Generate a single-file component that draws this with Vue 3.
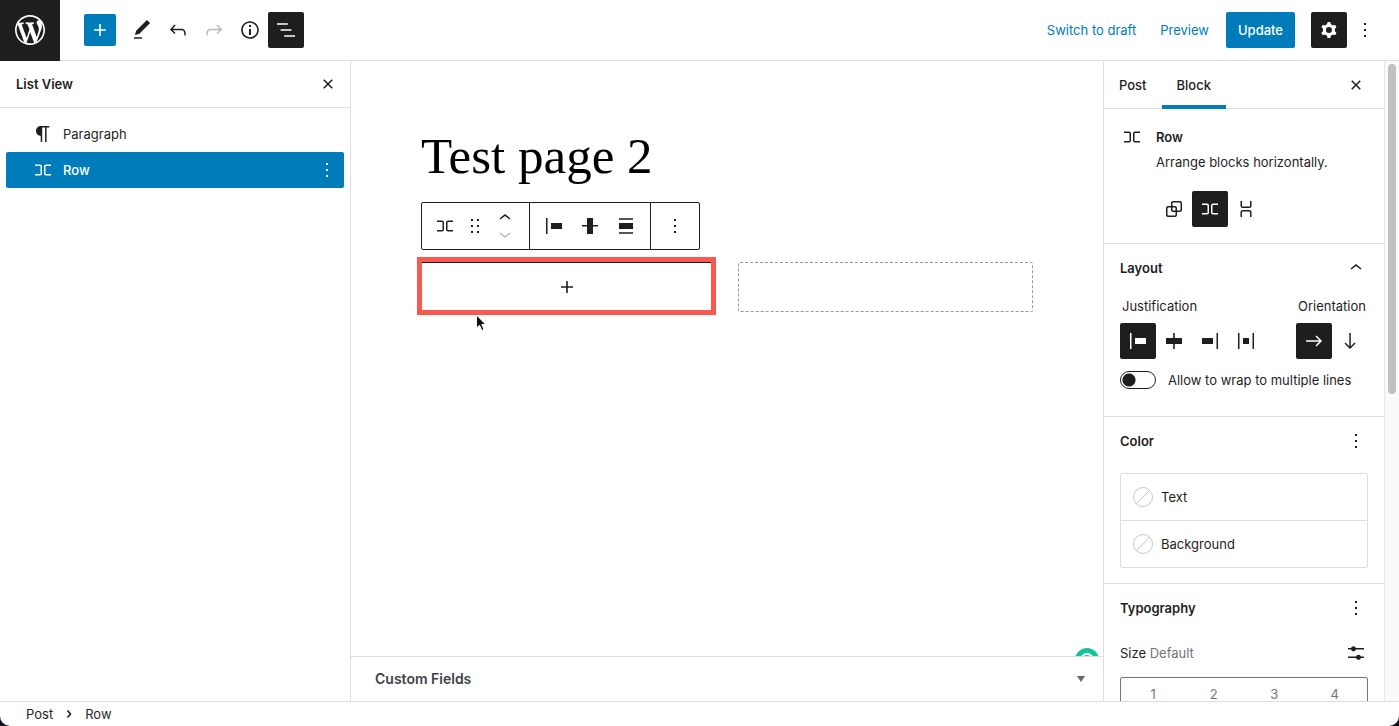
<script setup>
import { ref, h } from 'vue'

const paths = {
  plus: 'M18 11.2h-5.2V6h-1.6v5.2H6v1.6h5.2V18h1.6v-5.2H18z',
  edit: 'M20.1 5.1L16.9 2 6.2 12.7l-1.3 4.4 4.5-1.3L20.1 5.1zM4 20.8h8v-1.5H4v1.5z',
  undo: 'M18.3 11.7c-.6-.6-1.4-.9-2.3-.9H6.7l2.9-3.3-1.1-1-4.5 5L8.5 16l1-1-2.7-2.7H16c.5 0 .9.2 1.3.5 1 1 1 3.4 1 4.5v.3h1.5v-.2c0-1.5 0-4.3-1.5-5.7z',
  redo: 'M15.6 6.5l-1.1 1 2.9 3.3H8c-.9 0-1.7.3-2.3.9-1.4 1.5-1.4 4.2-1.4 5.6v.2h1.5v-.3c0-1.1 0-3.5 1-4.5.3-.3.7-.5 1.3-.5h9.2L14.5 15l1.1 1.1 4.6-4.6-4.6-5z',
  info: 'M12 3.2c-4.8 0-8.8 3.9-8.8 8.8 0 4.8 3.9 8.8 8.8 8.8 4.8 0 8.8-3.9 8.8-8.8 0-4.8-4-8.8-8.8-8.8zm0 16c-4 0-7.2-3.3-7.2-7.2C4.8 8 8 4.8 12 4.8s7.2 3.3 7.2 7.2c0 4-3.2 7.2-7.2 7.2zM11 17h2v-6h-2v6zm0-8h2V7h-2v2z',
  list: 'M13.8 5.2H3v1.5h10.8V5.2zm-3.6 12v1.5H21v-1.5H10.2zm7.2-6H6.6v1.5h10.8v-1.5z',
  close: 'M12 13.06l3.712 3.713 1.061-1.06L13.061 12l3.712-3.712-1.06-1.06L12 10.938 8.288 7.227l-1.061 1.06L10.939 12l-3.712 3.712 1.06 1.061L12 13.061z',
  more: 'M13 19h-2v-2h2v2zm0-6h-2v-2h2v2zm0-6h-2V5h2v2z',
  row: 'M4 6.5h5a2 2 0 0 1 2 2v7a2 2 0 0 1-2 2H4V16h5a.5.5 0 0 0 .5-.5v-7A.5.5 0 0 0 9 8H4V6.5Zm16 0h-5a2 2 0 0 0-2 2v7a2 2 0 0 0 2 2h5V16h-5a.5.5 0 0 1-.5-.5v-7A.5.5 0 0 1 15 8h5V6.5Z',
  stack: 'M17.5 4v5a2 2 0 0 1-2 2h-7a2 2 0 0 1-2-2V4H8v5a.5.5 0 0 0 .5.5h7A.5.5 0 0 0 16 9V4h1.5Zm0 16v-5a2 2 0 0 0-2-2h-7a2 2 0 0 0-2 2v5H8v-5a.5.5 0 0 1 .5-.5h7a.5.5 0 0 1 .5.5v5h1.5Z',
  group: 'M18 4h-7c-1.1 0-2 .9-2 2v3H6c-1.1 0-2 .9-2 2v7c0 1.1.9 2 2 2h7c1.1 0 2-.9 2-2v-3h3c1.1 0 2-.9 2-2V6c0-1.1-.9-2-2-2zm-4.5 14c0 .3-.2.5-.5.5H6c-.3 0-.5-.2-.5-.5v-7c0-.3.2-.5.5-.5h3V13c0 1.1.9 2 2 2h2.5v3zm0-4.5H11c-.3 0-.5-.2-.5-.5v-2.5H13c.3 0 .5.2.5.5v2.5zm5-.5c0 .3-.2.5-.5.5h-3V11c0-1.1-.9-2-2-2h-2.5V6c0-.3.2-.5.5-.5h7c.3 0 .5.2.5.5v7z',
  left: 'M9 9v6h11V9H9zM4 20h1.5V4H4v16z',
  center: 'M20 9h-7.2V4h-1.6v5H4v6h7.2v5h1.6v-5H20z',
  right: 'M4 15h11V9H4v6zM18.5 4v16H20V4h-1.5z',
  between: 'M9 15h6V9H9v6zm-5 5h1.5V4H4v16zM18.5 4v16H20V4h-1.5z',
  middle: 'M20 11h-5V4H9v7H4v1.5h5V20h6v-7.5h5z',
  none: 'M5 15h14V9H5v6zm0 4.8h14v-1.5H5v1.5zM5 4.2v1.5h14V4.2H5z',
  up: 'M6.5 12.4L12 8l5.5 4.4-.9 1.2L12 10l-4.5 3.6-1-1.2z',
  down: 'M17.5 11.6L12 16l-5.5-4.4.9-1.2L12 14l4.5-3.6 1 1.2z',
  drag: 'M8 7h2V5H8v2zm0 6h2v-2H8v2zm0 6h2v-2H8v2zm6-14v2h2V5h-2zm0 8h2v-2h-2v2zm0 6h2v-2h-2v2z',
  arrowRight: 'm14.5 6.5-1 1 3.7 3.7H4v1.6h13.2l-3.7 3.7 1 1 5.6-5.5z',
  arrowDown: 'm16.5 13.5-3.7 3.7V4h-1.5v13.2l-3.8-3.7-1 1 5.5 5.6 5.5-5.6z',
  cog: 'M10.289 4.836A1 1 0 0111.275 4h1.306a1 1 0 01.987.836l.244 1.466c.787.26 1.503.679 2.108 1.218l1.393-.522a1 1 0 011.216.437l.653 1.13a1 1 0 01-.23 1.273l-1.148.944a6.025 6.025 0 010 2.435l1.149.946a1 1 0 01.23 1.272l-.653 1.13a1 1 0 01-1.216.437l-1.394-.522c-.605.54-1.32.958-2.108 1.218l-.244 1.466a1 1 0 01-.987.836h-1.306a1 1 0 01-.986-.836l-.244-1.466a5.995 5.995 0 01-2.108-1.218l-1.394.522a1 1 0 01-1.217-.436l-.653-1.131a1 1 0 01.23-1.272l1.149-.946a6.026 6.026 0 010-2.435l-1.148-.944a1 1 0 01-.23-1.272l.653-1.131a1 1 0 011.217-.437l1.393.522a5.994 5.994 0 012.108-1.218l.244-1.466zM14.929 12a3 3 0 11-6 0 3 3 0 016 0z',
  paragraph: 'M18.3 4H9.9v-.1l-.9.2c-2.3.4-4 2.4-4 4.8s1.7 4.4 4 4.8l.7.1V20h1.5V5.5h2.9V20h1.5V5.5h2.7V4z',
  settings: 'M14.5 13.8c-1.1 0-2.1.7-2.4 1.8H4V17h8.1c.3 1 1.3 1.8 2.4 1.8s2.1-.7 2.4-1.8H20v-1.5h-3.1c-.3-1-1.3-1.7-2.4-1.7zM11.9 7c-.3-1-1.3-1.8-2.4-1.8S7.4 6 7.1 7H4v1.5h3.1c.3 1 1.3 1.8 2.4 1.8s2.1-.7 2.4-1.8H20V7h-8.1z',
}

const Icon = (props) =>
  h('svg', { width: 24, height: 24, viewBox: '0 0 24 24', fill: 'currentColor', 'aria-hidden': 'true' }, [
    h('path', { d: paths[props.name], 'fill-rule': 'evenodd' }),
  ])
Icon.props = ['name']

const variation = ref('row')
const justify = ref('left')
const orientation = ref('arrowRight')
const wrap = ref(false)
const variations = [['group', 'Group'], ['row', 'Row'], ['stack', 'Stack']]
const justifications = [
  ['left', 'Justify items left'],
  ['center', 'Justify items center'],
  ['right', 'Justify items right'],
  ['between', 'Space between items'],
]
const orientations = [['arrowRight', 'Horizontal'], ['arrowDown', 'Vertical']]
</script>

<template>
  <div class="editor">
    <header class="topbar">
      <a class="logo" href="#" aria-label="View posts">
        <svg width="30" height="30" viewBox="0 0 20 20" fill="currentColor" aria-hidden="true">
          <path d="M20 10c0-5.51-4.49-10-10-10C4.48 0 0 4.49 0 10c0 5.52 4.48 10 10 10 5.51 0 10-4.48 10-10zM7.78 15.37L4.37 6.22c.55-.02 1.17-.08 1.17-.08.5-.06.44-1.13-.06-1.11 0 0-1.45.11-2.37.11-.18 0-.37 0-.58-.01C4.12 2.69 6.87 1.11 10 1.11c2.33 0 4.45.87 6.05 2.34-.68-.11-1.65.39-1.65 1.58 0 .74.45 1.36.9 2.1.35.61.55 1.36.55 2.46 0 1.49-1.4 5-1.4 5l-3.03-8.37c.54-.02.82-.17.82-.17.5-.05.44-1.25-.06-1.22 0 0-1.44.12-2.38.12-.87 0-2.33-.12-2.33-.12-.5-.03-.56 1.2-.06 1.22l.92.08 1.26 3.41zM17.41 10c.24-.64.74-1.87.43-4.25.7 1.29 1.05 2.71 1.05 4.25 0 3.29-1.73 6.24-4.4 7.78.97-2.59 1.94-5.2 2.92-7.78zM6.1 18.09C3.12 16.65 1.11 13.53 1.11 10c0-1.3.23-2.48.72-3.59C3.25 10.3 4.67 14.2 6.1 18.09zm4.03-6.63l2.58 6.98c-.86.29-1.76.45-2.71.45-.79 0-1.57-.11-2.29-.33.81-2.38 1.62-4.74 2.42-7.1z" />
        </svg>
      </a>
      <div class="tools">
        <button class="inserter" aria-label="Toggle block inserter"><Icon name="plus" /></button>
        <button class="icon-btn" aria-label="Tools"><Icon name="edit" /></button>
        <button class="icon-btn" aria-label="Undo"><Icon name="undo" /></button>
        <button class="icon-btn faded" aria-label="Redo"><Icon name="redo" /></button>
        <button class="icon-btn" aria-label="Details"><Icon name="info" /></button>
        <button class="icon-btn active" aria-label="List View"><Icon name="list" /></button>
      </div>
      <div class="actions">
        <button class="link-btn">Switch to draft</button>
        <button class="link-btn">Preview</button>
        <button class="update">Update</button>
        <div class="action-icons">
          <button class="icon-btn active" aria-label="Settings"><Icon name="cog" /></button>
          <button class="icon-btn" aria-label="Options"><Icon name="more" /></button>
        </div>
      </div>
    </header>

    <div class="body">
      <aside class="list-view">
        <div class="list-head">
          <h2>List View</h2>
          <button class="icon-btn slim" aria-label="Close list view"><Icon name="close" /></button>
        </div>
        <ul class="tree">
          <li><a class="node" href="#"><Icon name="paragraph" /><span>Paragraph</span></a></li>
          <li class="selected">
            <a class="node" href="#"><Icon name="row" /><span>Row</span></a>
            <button class="icon-btn row-more" aria-label="Row options"><Icon name="more" /></button>
          </li>
        </ul>
      </aside>

      <main class="content">
        <div class="canvas">
          <article class="post">
            <h1>Test page 2</h1>
            <div class="toolbar" role="toolbar" aria-label="Block tools">
              <div class="seg seg-block">
                <button aria-label="Row"><Icon name="row" /></button>
                <button aria-label="Drag"><Icon name="drag" /></button>
                <div class="movers">
                  <button aria-label="Move up"><Icon name="up" /></button>
                  <button class="faded" aria-label="Move down"><Icon name="down" /></button>
                </div>
              </div>
              <div class="seg seg-align">
                <button class="wide" aria-label="Justify"><Icon name="left" /></button>
                <button class="wide" aria-label="Vertical alignment"><Icon name="middle" /></button>
                <button class="wide" aria-label="Align"><Icon name="none" /></button>
              </div>
              <div class="seg seg-more">
                <button aria-label="Options"><Icon name="more" /></button>
              </div>
            </div>
            <div class="columns">
              <div class="slot first">
                <button class="appender" aria-label="Add block"><Icon name="plus" /></button>
                <svg class="cursor" width="14" height="20" viewBox="0 0 14 20" aria-hidden="true">
                  <path d="M1.500 1v13l3-2.700 2.300 5.200 2.200-1-2.200-5h4z" fill="#111" stroke="#fff" stroke-width="1" />
                </svg>
              </div>
              <div class="slot dashed"></div>
            </div>
          </article>
          <svg class="badge" width="24" height="24" viewBox="0 0 24 24" aria-hidden="true">
            <circle cx="12" cy="12" r="12" fill="#15c39a" />
            <circle cx="12" cy="12" r="6" fill="none" stroke="#fff" stroke-width="2" />
          </svg>
        </div>
        <button class="custom-fields">
          <span>Custom Fields</span>
          <svg width="10" height="6" viewBox="0 0 10 6" aria-hidden="true"><path d="M1 0h8L5 6z" fill="#646970" /></svg>
        </button>
      </main>

      <aside class="sidebar">
        <div class="panel">
          <div class="tabs">
            <button class="tab">Post</button>
            <button class="tab current">Block</button>
            <button class="icon-btn slim tab-close" aria-label="Close settings"><Icon name="close" /></button>
          </div>

          <section class="card">
            <Icon name="row" />
            <div>
              <h2>Row</h2>
              <p>Arrange blocks horizontally.</p>
              <div class="switcher">
                <button v-for="[id, label] in variations" :key="id" class="icon-btn" :class="{ active: variation === id }" :aria-label="label" @click="variation = id"><Icon :name="id" /></button>
              </div>
            </div>
          </section>

          <section class="group layout">
            <div class="group-head">
              <h2>Layout</h2>
              <button class="icon-btn slim" aria-label="Collapse layout"><Icon name="up" /></button>
            </div>
            <div class="layout-row">
              <fieldset>
                <legend>Justification</legend>
                <div class="buttons">
                  <button v-for="[id, label] in justifications" :key="id" class="icon-btn" :class="{ active: justify === id }" :aria-label="label" @click="justify = id"><Icon :name="id" /></button>
                </div>
              </fieldset>
              <fieldset>
                <legend>Orientation</legend>
                <div class="buttons">
                  <button v-for="[id, label] in orientations" :key="id" class="icon-btn" :class="{ active: orientation === id }" :aria-label="label" @click="orientation = id"><Icon :name="id" /></button>
                </div>
              </fieldset>
            </div>
            <div class="wrap-row">
              <input id="wrap" v-model="wrap" class="toggle" type="checkbox" />
              <label for="wrap">Allow to wrap to multiple lines</label>
            </div>
          </section>

          <section class="group color">
            <div class="group-head">
              <h2>Color</h2>
              <button class="icon-btn slim" aria-label="Color options"><Icon name="more" /></button>
            </div>
            <div class="color-list">
              <button v-for="name in ['Text', 'Background']" :key="name">
                <svg width="20" height="20" viewBox="0 0 20 20" fill="none" stroke="#c8c8c8" aria-hidden="true">
                  <circle cx="10" cy="10" r="9.5" /><path d="M3.500 16.500l13-13" />
                </svg>
                <span>{{ name }}</span>
              </button>
            </div>
          </section>

          <section class="group typography">
            <div class="group-head">
              <h2>Typography</h2>
              <button class="icon-btn slim" aria-label="Typography options"><Icon name="more" /></button>
            </div>
            <div class="size-row">
              <span>Size <span class="muted">Default</span></span>
              <button class="icon-btn slim" aria-label="Set custom size"><Icon name="settings" /></button>
            </div>
            <div class="sizes">
              <button v-for="n in 4" :key="n">{{ n }}</button>
            </div>
          </section>
        </div>
        <div class="scrollbar"><div class="thumb"></div></div>
      </aside>
    </div>

    <footer class="crumbs">
      <a href="#">Post</a>
      <svg width="6" height="8" viewBox="0 0 6 8" fill="none" stroke="#1e1e1e" stroke-width="1.600" aria-hidden="true"><path d="M1.500 .5L4.500 4l-3 3.500" /></svg>
      <span>Row</span>
    </footer>
  </div>
</template>

<style>
body {
  background: #14141c;
}
</style>

<style scoped>
.editor {
  display: flex;
  flex-direction: column;
  height: 100vh;
  overflow: hidden;
  border-radius: 0 0 10px 10px;
  background: #fff;
  color: #1e1e1e;
  font: 400 13px/20px Inter, "Liberation Sans", sans-serif;
}
* {
  box-sizing: border-box;
}
button {
  display: flex;
  align-items: center;
  justify-content: center;
  padding: 0;
  border: 0;
  border-radius: 2px;
  background: none;
  color: inherit;
  font: inherit;
  cursor: pointer;
}
a {
  color: inherit;
  text-decoration: none;
}
svg {
  display: block;
  flex: none;
}
h1, h2, p, ul, fieldset {
  margin: 0;
  padding: 0;
  border: 0;
}
h2 {
  font-size: 13px;
  font-weight: 600;
}
.icon-btn {
  width: 36px;
  height: 36px;
}
.slim {
  width: 24px;
}
.active {
  background: #1e1e1e;
  color: #fff;
}
.faded {
  color: #b9b9b9;
}

.topbar {
  display: flex;
  flex: none;
  align-items: center;
  height: 61px;
  border-bottom: 1px solid #ddd;
}
.logo {
  display: flex;
  align-items: center;
  justify-content: center;
  align-self: flex-start;
  width: 60px;
  height: 61px;
  padding-bottom: 1px;
  background: #1e1e1e;
  color: #fff;
}
.tools {
  display: flex;
  align-items: center;
  padding-left: 24px;
}
.inserter {
  width: 32px;
  height: 32px;
  margin-right: 8px;
  background: #007cba;
  color: #fff;
}
.actions {
  display: flex;
  align-items: center;
  margin-left: auto;
  padding-right: 16px;
}
.link-btn {
  height: 36px;
  padding: 0 12px;
  color: #007cba;
}
.update {
  height: 36px;
  margin: 0 16px 0 5px;
  padding: 0 12px;
  background: #007cba;
  color: #fff;
  font-weight: 500;
}
.action-icons {
  display: flex;
}

.body {
  display: flex;
  flex: 1;
  min-height: 0;
}
.list-view {
  flex: none;
  width: 351px;
  border-right: 1px solid #ddd;
}
.list-head {
  display: flex;
  align-items: center;
  justify-content: space-between;
  height: 47px;
  padding: 0 10px 0 16px;
  border-bottom: 1px solid #ddd;
}
.tree {
  padding: 8px 6px;
  list-style: none;
}
.tree li {
  display: flex;
  align-items: center;
  height: 36px;
  border-radius: 2px;
}
.node {
  display: flex;
  flex: 1;
  align-items: center;
  gap: 8px;
  padding-left: 25px;
}
.row-more {
  width: 34px;
}
.selected {
  background: #007cba;
  color: #fff;
  font-weight: 500;
}

.content {
  display: flex;
  flex: 1;
  flex-direction: column;
  min-width: 0;
}
.canvas {
  position: relative;
  flex: 1;
  overflow: hidden;
  padding: 61px 24px 0;
}
.post {
  max-width: 612px;
  margin: 0 auto;
}
h1 {
  color: #000;
  font: 400 51px/68px "Liberation Serif", serif;
}
.toolbar {
  display: inline-flex;
  height: 48px;
  margin: 12px 0;
  border: 1px solid #1e1e1e;
  border-radius: 2px;
  vertical-align: top;
}
.seg {
  display: flex;
  align-items: center;
}
.seg + .seg {
  border-left: 1px solid #1e1e1e;
}
.seg-block {
  gap: 6px;
  padding: 0 12px 0 11px;
}
.seg-align {
  padding: 0 6px;
}
.wide {
  width: 36px;
}
.seg-more {
  padding: 0 12px;
}
.movers button {
  height: 16px;
}
.columns {
  display: grid;
  grid-template-columns: 1fr 1fr;
  gap: 22px;
}
.slot {
  position: relative;
  height: 50px;
}
.first {
  border: 1px solid #1e1e1e;
}
.first::after {
  position: absolute;
  inset: -6px -1px -4px -5px;
  border: 5px solid #f9594f;
  content: "";
  pointer-events: none;
}
.dashed {
  border: 1px dashed #999;
  border-radius: 2px;
}
.appender {
  width: 100%;
  height: 100%;
  padding-right: 3px;
}
.cursor {
  position: absolute;
  top: 51px;
  left: 53px;
}
.badge {
  position: absolute;
  right: 4px;
  bottom: -16px;
}
.custom-fields {
  flex: none;
  justify-content: space-between;
  height: 45px;
  padding: 0 17px 0 24px;
  border-top: 1px solid #ddd;
  border-radius: 0;
  color: #3c434a;
  font-size: 14px;
  font-weight: 600;
}

.sidebar {
  display: flex;
  flex: none;
  width: 296px;
  border-left: 1px solid #ddd;
}
.panel {
  flex: 1;
  overflow: hidden;
}
.tabs {
  display: flex;
  height: 48px;
  border-bottom: 1px solid #ddd;
}
.tab {
  height: 48px;
  padding: 0 15px;
  border-radius: 0;
  font-weight: 500;
}
.current {
  box-shadow: inset 0 -4px #007cba;
}
.tab-close {
  height: 48px;
  margin-left: auto;
  margin-right: 16px;
}
.card {
  display: flex;
  gap: 12px;
  padding: 16px;
}
.card h2 {
  line-height: 24px;
}
.card p {
  margin-bottom: 16px;
  line-height: 26px;
}
.switcher, .buttons {
  display: flex;
}
.group {
  padding: 0 16px;
  border-top: 1px solid #ddd;
}
.group-head, .size-row {
  display: flex;
  align-items: center;
  justify-content: space-between;
}
.group-head {
  height: 48px;
}
.layout {
  padding-bottom: 26px;
}
.layout-row {
  display: flex;
  justify-content: space-between;
  padding-top: 4px;
}
legend {
  padding: 0 2px;
  margin-bottom: 7px;
}
.wrap-row {
  display: flex;
  align-items: center;
  gap: 12px;
  padding-top: 11px;
}
.toggle {
  width: 36px;
  height: 18px;
  margin: 0;
  border: 1px solid #1e1e1e;
  border-radius: 9px;
  appearance: none;
  background: radial-gradient(circle at 8px 8px, #1e1e1e 6px, transparent 7px);
}
.toggle:checked {
  background: radial-gradient(circle at 26px 8px, #1e1e1e 6px, transparent 7px);
}
.color {
  padding-bottom: 15px;
}
.color-list {
  margin-top: 8px;
  border: 1px solid #ddd;
  border-radius: 2px;
}
.color-list button {
  justify-content: flex-start;
  gap: 8px;
  width: 100%;
  height: 46px;
  padding: 0 12px;
}
.color-list button + button {
  height: 47px;
  border-top: 1px solid #ddd;
  border-radius: 0;
}
.size-row {
  height: 36px;
  margin: 3px 0 6px;
}
.muted {
  color: #757575;
}
.sizes {
  display: flex;
  height: 34px;
  padding: 0 2px;
  border: 1px solid #757575;
  border-radius: 2px;
  color: #757575;
  line-height: 14px;
}
.sizes button {
  flex: 1;
}
.scrollbar {
  flex: none;
  width: 15px;
  padding: 3px;
  border-left: 1px solid #e8e8e8;
  background: #fafafa;
}
.thumb {
  width: 8px;
  height: 52%;
  border-radius: 4px;
  background: #c1c1c1;
}

.crumbs {
  display: flex;
  flex: none;
  align-items: center;
  gap: 13px;
  height: 25px;
  padding: 0 26px;
  border-top: 1px solid #ddd;
}
</style>
